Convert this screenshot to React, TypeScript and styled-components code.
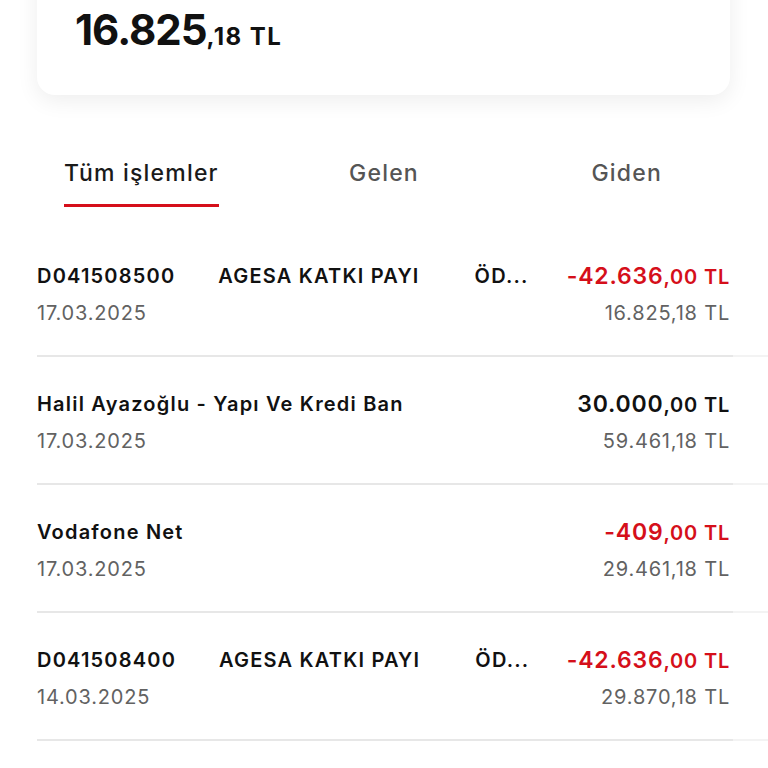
import React from "react";
import styled, { createGlobalStyle } from "styled-components";

const GlobalStyle = createGlobalStyle`
  html, body {
    margin: 0;
    padding: 0;
    background: #ffffff;
    font-family: "Inter", "Noto Sans", sans-serif;
    color: #111;
  }
`;

type Tx = {
  parts: string[];
  date: string;
  whole: string;
  cents: string;
  negative: boolean;
  balance: string;
};

const transactions: Tx[] = [
  {
    parts: ["D041508500", "AGESA KATKI PAYI", "ÖD..."],
    date: "17.03.2025",
    whole: "-42.636",
    cents: ",00 TL",
    negative: true,
    balance: "16.825,18 TL",
  },
  {
    parts: ["Halil Ayazoğlu - Yapı Ve Kredi Ban"],
    date: "17.03.2025",
    whole: "30.000",
    cents: ",00 TL",
    negative: false,
    balance: "59.461,18 TL",
  },
  {
    parts: ["Vodafone Net"],
    date: "17.03.2025",
    whole: "-409",
    cents: ",00 TL",
    negative: true,
    balance: "29.461,18 TL",
  },
  {
    parts: ["D041508400", "AGESA KATKI PAYI", "ÖD..."],
    date: "14.03.2025",
    whole: "-42.636",
    cents: ",00 TL",
    negative: true,
    balance: "29.870,18 TL",
  },
];

export default function App() {
  return (
    <Page>
      <GlobalStyle />
      <BalanceCard>
        <BalanceWhole>16.825</BalanceWhole>
        <BalanceCents>,18 TL</BalanceCents>
      </BalanceCard>
      <Tabs>
        <Tab>
          <TabLabel active>Tüm işlemler</TabLabel>
        </Tab>
        <Tab>
          <TabLabel>Gelen</TabLabel>
        </Tab>
        <Tab>
          <TabLabel>Giden</TabLabel>
        </Tab>
      </Tabs>
      <List>
        {transactions.map((tx, i) => (
          <Row key={i}>
            <RowContent>
              <Left>
                <Title>
                  {tx.parts.map((p, j) => (
                    <TitlePart key={j} index={j}>
                      {p}
                    </TitlePart>
                  ))}
                </Title>
                <SubText>{tx.date}</SubText>
              </Left>
              <Right>
                <Amount negative={tx.negative}>
                  <AmountWhole>{tx.whole}</AmountWhole>
                  <AmountCents>{tx.cents}</AmountCents>
                </Amount>
                <SubText>{tx.balance}</SubText>
              </Right>
            </RowContent>
            <Divider />
          </Row>
        ))}
      </List>
    </Page>
  );
}

const Page = styled.div`
  width: 768px;
  height: 768px;
  overflow: hidden;
  background: #fff;
`;

const BalanceCard = styled.div`
  margin: -40px 38px 0 37px;
  height: 135px;
  box-sizing: border-box;
  padding: 44px 0 0 38px;
  background: #fff;
  border-radius: 18px;
  box-shadow: 0 6px 22px rgba(0, 0, 0, 0.07);
  display: flex;
  align-items: baseline;
`;

const BalanceWhole = styled.span`
  font-size: 42px;
  font-weight: 700;
  letter-spacing: -1px;
  color: #111;
`;

const BalanceCents = styled.span`
  font-size: 24px;
  font-weight: 700;
  letter-spacing: 1.4px;
  color: #111;
`;

const Tabs = styled.div`
  margin-top: 60px;
  padding: 0 20px;
  display: grid;
  grid-template-columns: repeat(3, 1fr);
`;

const Tab = styled.div`
  display: flex;
  justify-content: center;
`;

const TabLabel = styled.div<{ active?: boolean }>`
  font-size: 23px;
  font-weight: 500;
  letter-spacing: 1.2px;
  color: ${(p) => (p.active ? "#1a1a1a" : "#555")};
  padding: 4px 0 17px;
  border-bottom: 3px solid ${(p) => (p.active ? "#d50f1a" : "transparent")};
`;

const List = styled.div`
  margin-top: 22px;
`;

const Row = styled.div`
  padding-left: 37px;
`;

const RowContent = styled.div`
  height: 126px;
  box-sizing: border-box;
  padding: 34px 38px 0 0;
  display: flex;
  justify-content: space-between;
`;

const Divider = styled.div`
  height: 2px;
  background: linear-gradient(to right, #e7e7e7 0, #e7e7e7 696px, #f3f3f3 696px);
`;

const Left = styled.div`
  display: flex;
  flex-direction: column;
  gap: 11px;
`;

const Right = styled.div`
  display: flex;
  flex-direction: column;
  align-items: flex-end;
  gap: 11px;
`;

const Title = styled.div`
  display: flex;
  font-size: 20px;
  font-weight: 600;
  letter-spacing: 1.2px;
  color: #111;
  line-height: 26px;
  white-space: nowrap;
`;

const TitlePart = styled.span<{ index: number }>`
  margin-left: ${(p) => (p.index === 0 ? "0" : p.index === 1 ? "43px" : "55px")};
`;

const SubText = styled.div`
  font-size: 20px;
  color: #626262;
  line-height: 26px;
  letter-spacing: 0.8px;
`;

const Amount = styled.div<{ negative: boolean }>`
  color: ${(p) => (p.negative ? "#d50f1a" : "#111")};
  height: 26px;
  line-height: 26px;
  white-space: nowrap;
  letter-spacing: 0.8px;
`;

const AmountWhole = styled.span`
  font-size: 23px;
  font-weight: 600;
`;

const AmountCents = styled.span`
  font-size: 20px;
  font-weight: 600;
`;
